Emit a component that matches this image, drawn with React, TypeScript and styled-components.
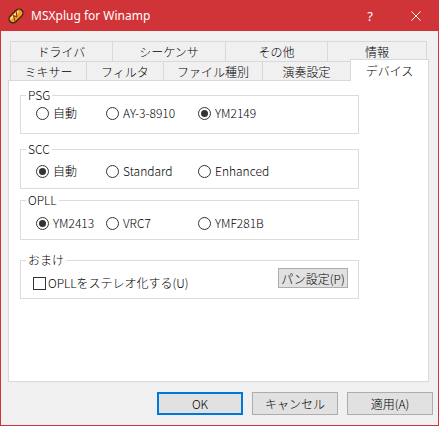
import React from "react";
import styled, { createGlobalStyle } from "styled-components";

const GlobalStyle = createGlobalStyle`
  html, body { margin: 0; padding: 0; background: #ffffff; }
  body { font-family: "Noto Sans CJK JP", "Noto Sans", sans-serif; font-weight: 300; }
  * { box-sizing: border-box; }
`;

const RED = "#d13438";

const Window = styled.div`
  width: 439px;
  height: 426px;
  border: 1px solid ${RED};
  border-top: none;
  background: #f0f0f0;
  display: flex;
  flex-direction: column;
`;

const TitleBar = styled.div`
  height: 31px;
  margin: 0 -1px;
  padding-left: 7px;
  background: ${RED};
  display: flex;
  align-items: center;
  color: #ffffff;
`;

const TitleText = styled.span`
  margin-left: 6px;
  font-family: "Noto Sans", "Open Sans", sans-serif;
  font-weight: 400;
  font-size: 12px;
  line-height: 16px;
  padding-top: 1px;
`;

const CaptionButtons = styled.div`
  margin-left: auto;
  display: flex;
  height: 100%;
`;

const CaptionButton = styled.div`
  width: 46px;
  height: 100%;
  display: flex;
  align-items: center;
  justify-content: center;
  color: #ffffff;
  font-family: "Noto Sans", sans-serif;
  font-weight: 400;
  font-size: 13px;
`;

const Content = styled.div`
  flex: 1;
  padding: 10px 9px 0 7px;
  display: flex;
  flex-direction: column;
`;

const TabStrip = styled.div`
  margin-left: 2px;
  margin-bottom: -1px;
  display: flex;
  flex-direction: column;
`;

const TabRow = styled.div`
  display: flex;
  height: 20px;
  align-items: flex-end;
`;

const Tab = styled.div<{ $w: number; $active?: boolean }>`
  width: ${(p) => p.$w}px;
  height: ${(p) => (p.$active ? 22 : 20)}px;
  flex: none;
  border: 1px solid #d9d9d9;
  border-bottom: none;
  background: ${(p) => (p.$active ? "#ffffff" : "#f0f0f0")};
  display: flex;
  align-items: center;
  justify-content: center;
  font-size: 12px;
  line-height: 14px;
  color: #000;
  position: ${(p) => (p.$active ? "relative" : "static")};
  z-index: ${(p) => (p.$active ? 1 : "auto")};
  & + & { margin-left: -1px; }
`;

const Panel = styled.div`
  height: 302px;
  border: 1px solid #d9d9d9;
  background: #ffffff;
  padding: 14px 0 0 11px;
  display: flex;
  flex-direction: column;
`;

const GroupBox = styled.div<{ $h: number; $pt: number; $mt: number }>`
  width: 339px;
  height: ${(p) => p.$h}px;
  margin-top: ${(p) => p.$mt}px;
  padding-top: ${(p) => p.$pt}px;
  border: 1px solid #dcdcdc;
  position: relative;
`;

const GroupLabel = styled.span`
  position: absolute;
  top: -8px;
  left: 5px;
  padding: 0 2px;
  background: #ffffff;
  font-size: 12px;
  line-height: 14px;
  color: #000;
`;

const RadioRow = styled.div`
  display: grid;
  grid-template-columns: 70px 92px auto;
  padding-left: 15px;
`;

const Option = styled.label`
  display: flex;
  align-items: center;
  gap: 4px;
  height: 14px;
  font-size: 12px;
  line-height: 14px;
  color: #000;
  white-space: nowrap;
`;

const RadioCircle = styled.span<{ $on?: boolean }>`
  width: 13px;
  height: 13px;
  flex: none;
  border: 1px solid #333333;
  border-radius: 50%;
  background: #ffffff;
  display: flex;
  align-items: center;
  justify-content: center;
  &::after {
    content: "";
    display: ${(p) => (p.$on ? "block" : "none")};
    width: 7px;
    height: 7px;
    border-radius: 50%;
    background: #333333;
  }
`;

const CheckBox = styled.span`
  width: 13px;
  height: 13px;
  flex: none;
  border: 1px solid #333333;
  background: #ffffff;
`;

const ExtraRow = styled.div`
  display: flex;
  align-items: flex-end;
  justify-content: space-between;
  height: 22px;
  padding: 0 10px 0 12px;
`;

const CheckOption = styled(Option)`
  gap: 2px;
`;

const SmallButton = styled.div`
  width: 70px;
  height: 20px;
  margin-bottom: 2px;
  border: 1px solid #adadad;
  background: #e1e1e1;
  display: flex;
  align-items: center;
  justify-content: center;
  font-size: 12px;
  color: #000;
`;

const Footer = styled.div`
  display: flex;
  justify-content: flex-end;
  gap: 9px;
  margin-top: 10px;
  margin-right: -4px;
`;

const DialogButton = styled.div<{ $default?: boolean }>`
  width: 86px;
  height: 23px;
  border: ${(p) => (p.$default ? "2px solid #0078d7" : "1px solid #adadad")};
  background: #e1e1e1;
  display: flex;
  align-items: center;
  justify-content: center;
  font-size: 12px;
  color: #000;
`;

const AppIcon = () => (
  <svg width="18" height="18" viewBox="0 0 18 18">
    <g transform="rotate(-45 9 9)">
      <rect x="0.8" y="5" width="16.4" height="8" rx="4" fill="#f29a28" stroke="#2e2418" strokeWidth="1.3" />
      <rect x="3" y="6.3" width="11" height="2" rx="1" fill="#ffe2a0" />
      <path d="M4.5 12 L7.5 7 L9 10 L12.5 6" fill="none" stroke="#8a3c06" strokeWidth="1.1" />
    </g>
  </svg>
);

const CloseIcon = () => (
  <svg width="10" height="10" viewBox="0 0 10 10">
    <path d="M0.5 0.5 L9.5 9.5 M9.5 0.5 L0.5 9.5" stroke="#fff" strokeWidth="1" />
  </svg>
);

type Opt = { label: string; on?: boolean };

const RadioGroup = ({ opts }: { opts: Opt[] }) => (
  <RadioRow>
    {opts.map((o) => (
      <Option key={o.label}>
        <RadioCircle $on={o.on} />
        {o.label}
      </Option>
    ))}
  </RadioRow>
);

export default function App() {
  return (
    <>
      <GlobalStyle />
      <Window>
        <TitleBar>
          <AppIcon />
          <TitleText>MSXplug for Winamp</TitleText>
          <CaptionButtons>
            <CaptionButton>?</CaptionButton>
            <CaptionButton>
              <CloseIcon />
            </CaptionButton>
          </CaptionButtons>
        </TitleBar>
        <Content>
          <TabStrip>
            <TabRow>
              <Tab $w={103}>ドライバ</Tab>
              <Tab $w={114}>シーケンサ</Tab>
              <Tab $w={103}>その他</Tab>
              <Tab $w={100}>情報</Tab>
            </TabRow>
            <TabRow>
              <Tab $w={77}>ミキサー</Tab>
              <Tab $w={78}>フィルタ</Tab>
              <Tab $w={100}>ファイル種別</Tab>
              <Tab $w={89}>演奏設定</Tab>
              <Tab $w={79} $active>
                デバイス
              </Tab>
            </TabRow>
          </TabStrip>
          <Panel>
            <GroupBox $h={39} $pt={10} $mt={0}>
              <GroupLabel>PSG</GroupLabel>
              <RadioGroup
                opts={[{ label: "自動" }, { label: "AY-3-8910" }, { label: "YM2149", on: true }]}
              />
            </GroupBox>
            <GroupBox $h={40} $pt={14} $mt={15}>
              <GroupLabel>SCC</GroupLabel>
              <RadioGroup
                opts={[{ label: "自動", on: true }, { label: "Standard" }, { label: "Enhanced" }]}
              />
            </GroupBox>
            <GroupBox $h={40} $pt={15} $mt={11}>
              <GroupLabel>OPLL</GroupLabel>
              <RadioGroup
                opts={[{ label: "YM2413", on: true }, { label: "VRC7" }, { label: "YMF281B" }]}
              />
            </GroupBox>
            <GroupBox $h={39} $pt={7} $mt={20}>
              <GroupLabel>おまけ</GroupLabel>
              <ExtraRow>
                <CheckOption>
                  <CheckBox />
                  OPLLをステレオ化する(U)
                </CheckOption>
                <SmallButton>パン設定(P)</SmallButton>
              </ExtraRow>
            </GroupBox>
          </Panel>
          <Footer>
            <DialogButton $default>OK</DialogButton>
            <DialogButton>キャンセル</DialogButton>
            <DialogButton>適用(A)</DialogButton>
          </Footer>
        </Content>
      </Window>
    </>
  );
}
